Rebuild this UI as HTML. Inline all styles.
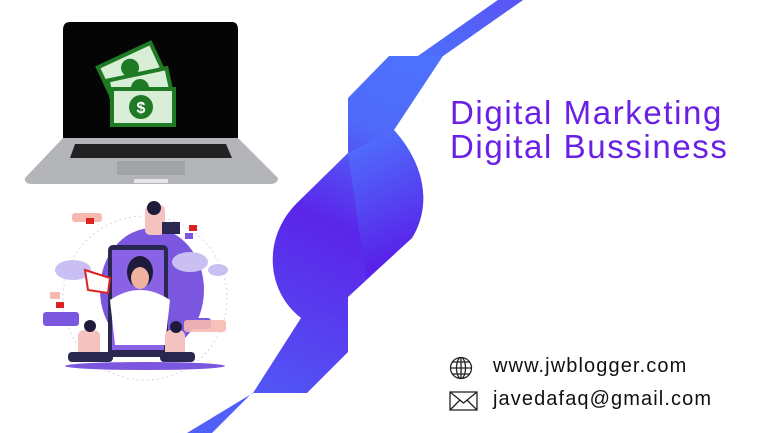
<!DOCTYPE html>
<html><head><meta charset="utf-8"><style>
html,body{margin:0;padding:0;background:#fff;width:768px;height:433px;overflow:hidden;font-family:"Liberation Sans",sans-serif}
.t{position:absolute;color:#6a1fe6;font-size:33px;left:450px;white-space:nowrap;letter-spacing:1.6px}
.c{position:absolute;color:#111;font-size:20px;left:493px;white-space:nowrap;letter-spacing:1.1px}
</style></head><body>
<svg width="768" height="433" style="position:absolute;left:0;top:0">
<defs>
<linearGradient id="g" gradientUnits="userSpaceOnUse" x1="430" y1="40" x2="260" y2="420">
<stop offset="0" stop-color="#4c74ff"/><stop offset="0.25" stop-color="#4f6af9"/><stop offset="0.5" stop-color="#5b25ea"/><stop offset="0.75" stop-color="#5740ef"/><stop offset="1" stop-color="#4f5ff8"/></linearGradient>
<linearGradient id="g2" gradientUnits="userSpaceOnUse" x1="360" y1="140" x2="420" y2="270"><stop offset="0" stop-color="#4f6ffc"/><stop offset="1" stop-color="#5a14e6"/></linearGradient>
<linearGradient id="g3" gradientUnits="userSpaceOnUse" x1="520" y1="0" x2="440" y2="60"><stop offset="0" stop-color="#5a55f3"/><stop offset="1" stop-color="#4e6cfc"/></linearGradient>
</defs>
<path d="M498,0 L523,0 L443,56 L394,130 C425,165 432,205 412,238 L348,297 L348,352 L307,393 L252,393 L212,433 L187,433 L253,393 L301,318 C265,290 262,235 300,200 L348,153 L348,98 L389,56 L418,56 Z" fill="url(#g)"/>
<path d="M498,0 L523,0 L443,56 L418,56 Z" fill="url(#g3)"/>
<path d="M348,153 L366,278 L412,238 C432,205 425,165 394,130 Z" fill="url(#g2)"/>
<!-- laptop -->
<path d="M70,22 L232,22 Q238,22 238,30 L238,138 L63,138 L63,30 Q63,22 70,22Z" fill="#050505"/>
<path d="M63,138 L238,138 L278,178 Q278,184 270,184 L32,184 Q24,184 25,178Z" fill="#b3b5b8"/>
<path d="M75,144 L226,144 L232,158 L70,158Z" fill="#222"/>
<rect x="117" y="161" width="68" height="14" fill="#a2a4a7"/>
<rect x="134" y="179" width="34" height="4" fill="#e5e5e5"/>
<!-- money -->
<g transform="rotate(-25 130 70)"><rect x="100" y="52" width="62" height="32" fill="#1e7a24"/><rect x="104" y="56" width="54" height="24" fill="#d8eed6"/><circle cx="131" cy="68" r="9" fill="#1e7a24"/></g>
<g transform="rotate(-12 140 88)"><rect x="108" y="72" width="64" height="32" fill="#1e7a24"/><rect x="112" y="76" width="56" height="24" fill="#d8eed6"/><circle cx="140" cy="88" r="9" fill="#1e7a24"/></g>
<rect x="110" y="87" width="66" height="40" fill="#1e7a24"/><rect x="114" y="91" width="58" height="32" fill="#d8eed6"/><circle cx="141" cy="107" r="12" fill="#1e7a24"/>
<text x="141" y="113" font-size="16" font-weight="bold" fill="#fff" text-anchor="middle" font-family="Liberation Sans">$</text>
<!-- illustration -->
<ellipse cx="145" cy="298" rx="82" ry="82" fill="none" stroke="#d6d2f4" stroke-dasharray="2 3"/>
<ellipse cx="152" cy="290" rx="52" ry="62" fill="#7b57df"/>
<rect x="108" y="245" width="60" height="112" rx="5" fill="#2a2750"/>
<rect x="112" y="250" width="52" height="100" fill="#8a62e6"/>
<ellipse cx="73" cy="270" rx="18" ry="10" fill="#c9bff2"/><ellipse cx="190" cy="262" rx="18" ry="10" fill="#c9bff2"/><ellipse cx="218" cy="270" rx="10" ry="6" fill="#c9bff2"/>
<path d="M110,300 Q140,280 170,300 L165,345 L115,345Z" fill="#fff"/>
<ellipse cx="140" cy="272" rx="13" ry="16" fill="#1e1b3a"/><ellipse cx="140" cy="278" rx="9" ry="11" fill="#f0b2a0"/>
<path d="M85,270 L110,278 L108,293 L88,290Z" fill="#fff" stroke="#d22" stroke-width="2"/>
<rect x="145" y="205" width="20" height="30" rx="5" fill="#f4c3bf"/><circle cx="154" cy="208" r="7" fill="#1e1b3a"/><rect x="162" y="222" width="18" height="12" fill="#2a2750"/>
<rect x="72" y="213" width="30" height="9" rx="3" fill="#f6b9b0"/>
<rect x="43" y="312" width="36" height="14" rx="3" fill="#7b57df"/>
<rect x="173" y="318" width="38" height="11" rx="3" fill="#7b57df"/>
<rect x="184" y="320" width="42" height="12" rx="3" fill="#f6b9b0" opacity=".9"/>
<rect x="86" y="218" width="8" height="6" fill="#d22"/><rect x="189" y="225" width="8" height="6" fill="#d22"/><rect x="185" y="233" width="8" height="6" fill="#7b57df"/>
<rect x="50" y="292" width="10" height="7" fill="#f6b9b0"/><rect x="56" y="302" width="8" height="6" fill="#d22"/>
<ellipse cx="145" cy="366" rx="80" ry="4" fill="#7b57df"/>
<rect x="78" y="330" width="22" height="30" rx="6" fill="#f4c3bf"/><circle cx="90" cy="326" r="6" fill="#1e1b3a"/><rect x="68" y="352" width="45" height="10" rx="4" fill="#2a2750"/>
<rect x="165" y="330" width="20" height="28" rx="6" fill="#f4c3bf"/><circle cx="176" cy="327" r="6" fill="#1e1b3a"/><rect x="160" y="352" width="35" height="10" rx="4" fill="#2a2750"/>
<!-- globe -->
<g fill="none" stroke="#222" stroke-width="1.3"><circle cx="461" cy="368" r="10.5"/><ellipse cx="461" cy="368" rx="4.5" ry="10.5"/><line x1="450.5" y1="368" x2="471.5" y2="368"/><line x1="461" y1="357.5" x2="461" y2="378.5"/><path d="M452,362 H470 M452,374 H470"/></g>
<!-- envelope -->
<g fill="none" stroke="#222" stroke-width="1.3"><rect x="450" y="392" width="27" height="18"/><path d="M450,392 L463.5,403 L477,392 M450,410 L460,400 M477,410 L467,400"/></g>
</svg>
<div class="t" style="top:94px">Digital Marketing</div>
<div class="t" style="top:128px">Digital Bussiness</div>
<div class="c" style="top:355px">www.jwblogger.com</div>
<div class="c" style="top:388px">javedafaq@gmail.com</div>
</body></html>
